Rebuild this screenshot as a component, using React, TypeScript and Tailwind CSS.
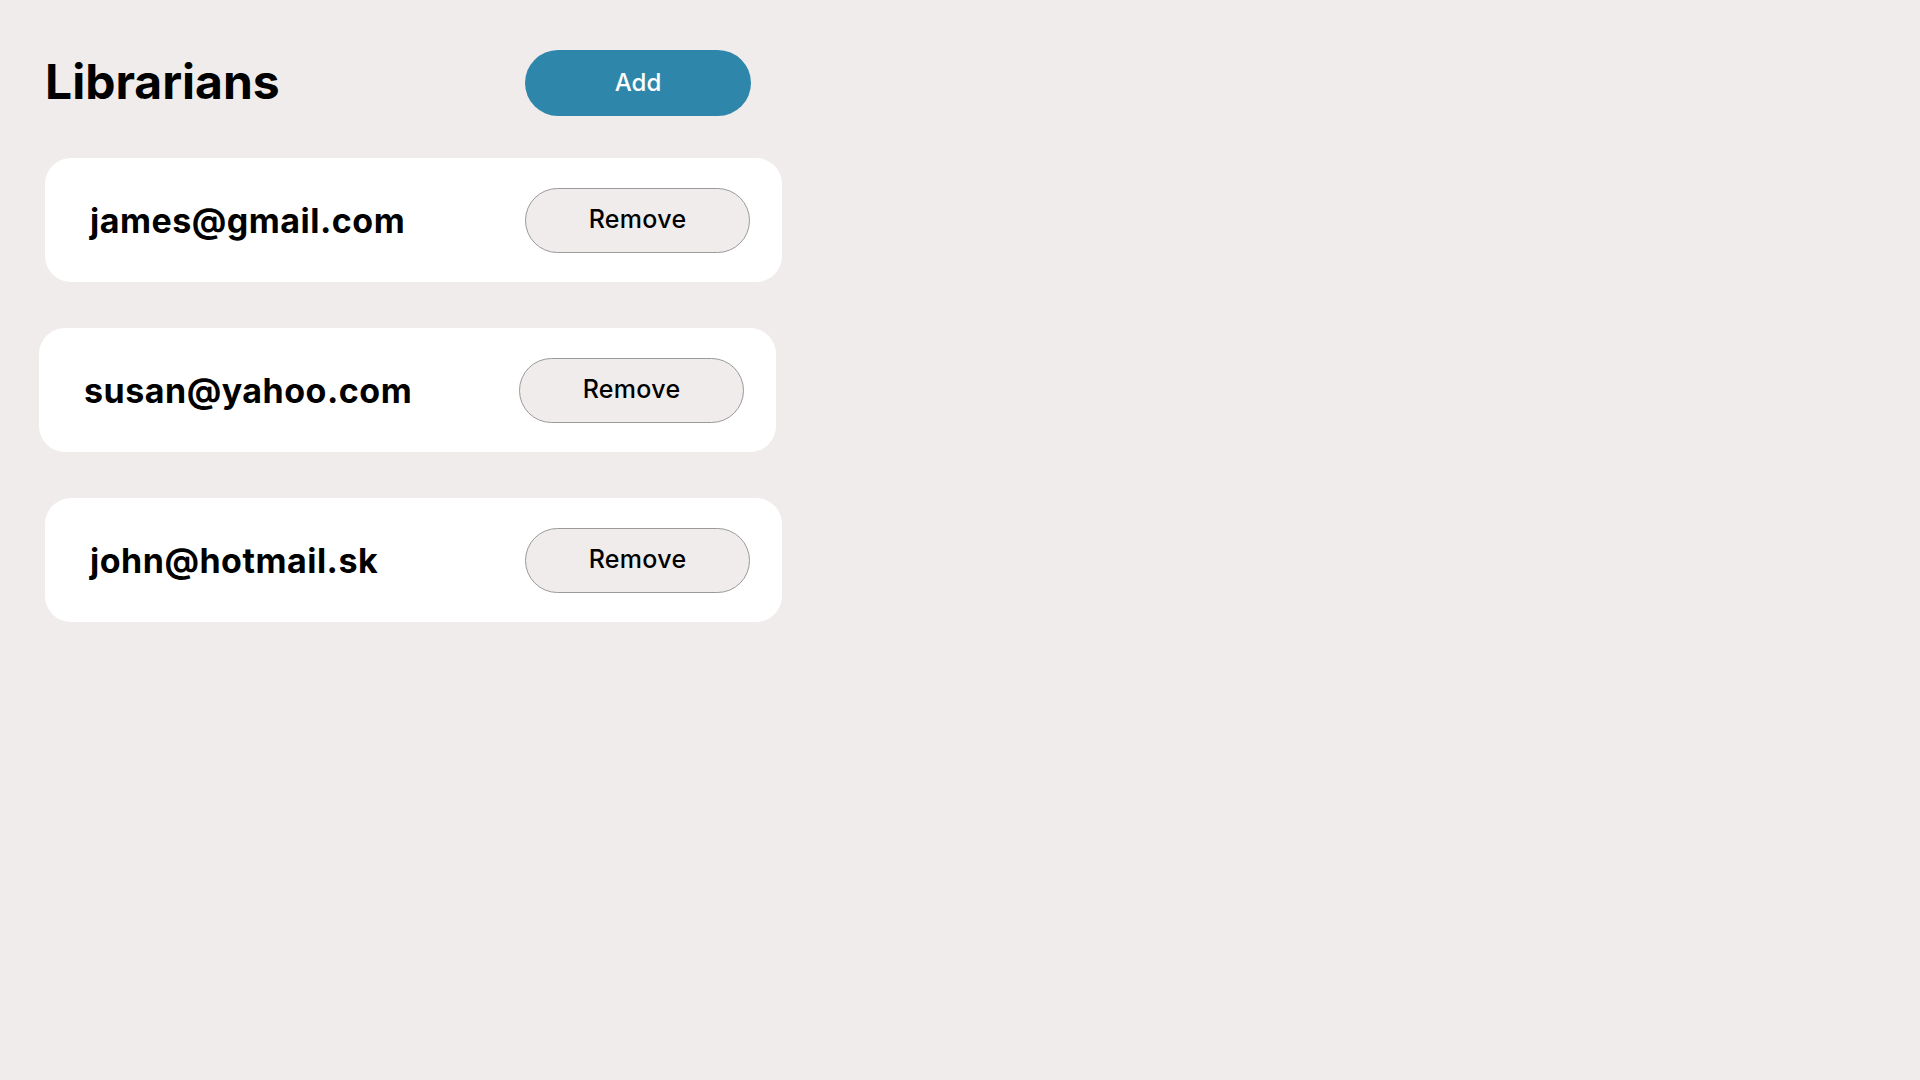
import React from "react";

const librarians = ["james@gmail.com", "susan@yahoo.com", "john@hotmail.sk"];

const RemoveButton = () => (
  <button className="h-[65px] w-[225px] shrink-0 rounded-full border border-[#9a9a9a] bg-[#efeceb] text-[25px] font-medium tracking-[0.3px] text-black">
    Remove
  </button>
);

export default function App() {
  return (
    <div className="min-h-screen bg-[#efeceb] pl-[45px] pt-[50px] font-['Inter',sans-serif] text-black">
      <div className="flex w-[706px] items-center justify-between">
        <h1 className="-mt-[2px] text-[48px] font-bold leading-none">Librarians</h1>
        <button className="h-[66px] w-[226px] rounded-full bg-[#2f86ab] text-[24px] font-medium text-white">
          Add
        </button>
      </div>

      <div className="mt-[42px] flex flex-col gap-[46px]">
        {librarians.map((email, i) => (
          <div
            key={email}
            className={
              i === 1
                ? "-ml-[6px] flex h-[124px] w-[737px] items-center justify-between rounded-[26px] bg-white pl-[45px] pr-[32px]"
                : "flex h-[124px] w-[737px] items-center justify-between rounded-[26px] bg-white pl-[45px] pr-[32px]"
            }
          >
            <span className="text-[34px] font-bold tracking-[0.5px]">{email}</span>
            <RemoveButton />
          </div>
        ))}
      </div>
    </div>
  );
}
